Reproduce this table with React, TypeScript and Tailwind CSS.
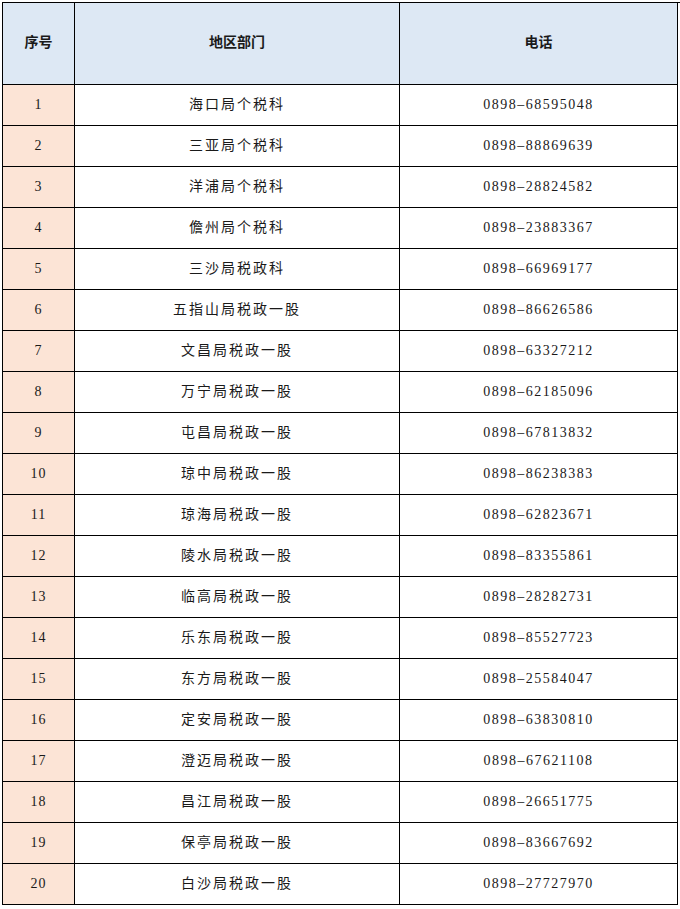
import React from 'react';

const rows: [string, string][] = [
  ['海口局个税科', '0898–68595048'],
  ['三亚局个税科', '0898–88869639'],
  ['洋浦局个税科', '0898–28824582'],
  ['儋州局个税科', '0898–23883367'],
  ['三沙局税政科', '0898–66969177'],
  ['五指山局税政一股', '0898–86626586'],
  ['文昌局税政一股', '0898–63327212'],
  ['万宁局税政一股', '0898–62185096'],
  ['屯昌局税政一股', '0898–67813832'],
  ['琼中局税政一股', '0898–86238383'],
  ['琼海局税政一股', '0898–62823671'],
  ['陵水局税政一股', '0898–83355861'],
  ['临高局税政一股', '0898–28282731'],
  ['乐东局税政一股', '0898–85527723'],
  ['东方局税政一股', '0898–25584047'],
  ['定安局税政一股', '0898–63830810'],
  ['澄迈局税政一股', '0898–67621108'],
  ['昌江局税政一股', '0898–26651775'],
  ['保亭局税政一股', '0898–83667692'],
  ['白沙局税政一股', '0898–27727970'],
];

const font = "font-['Liberation_Serif','Noto_Sans_CJK_SC',serif]";

export default function App() {
  return (
    <div className={`bg-white w-[680px] min-h-[909px] pt-[2px] pl-[2px] ${font} text-[14px] text-[#1a1a1a]`}>
      <div className="grid grid-cols-[72px_325px_278px] border-l border-t border-black">
        <div className="h-[82px] pb-[2px] flex items-center justify-center bg-[#dde8f4] border-r border-b border-black font-bold">
          序号
        </div>
        <div className="h-[82px] pb-[2px] flex items-center justify-center bg-[#dde8f4] border-r border-b border-black font-bold">
          地区部门
        </div>
        <div className="h-[82px] pb-[2px] flex items-center justify-center bg-[#dde8f4] border-r border-b border-black font-bold">
          电话
        </div>
        {rows.map(([dept, phone], i) => (
          <React.Fragment key={phone}>
            <div className="h-[41px] pb-[2px] flex items-center justify-center bg-[#fce4d6] border-r border-b border-black tracking-[1px]">
              {i + 1}
            </div>
            <div className="h-[41px] pb-[2px] flex items-center justify-center border-r border-b border-black tracking-[2px]">
              {dept}
            </div>
            <div className="h-[41px] pb-[2px] flex items-center justify-center border-r border-b border-black tracking-[1.5px]">
              {phone}
            </div>
          </React.Fragment>
        ))}
      </div>
    </div>
  );
}
